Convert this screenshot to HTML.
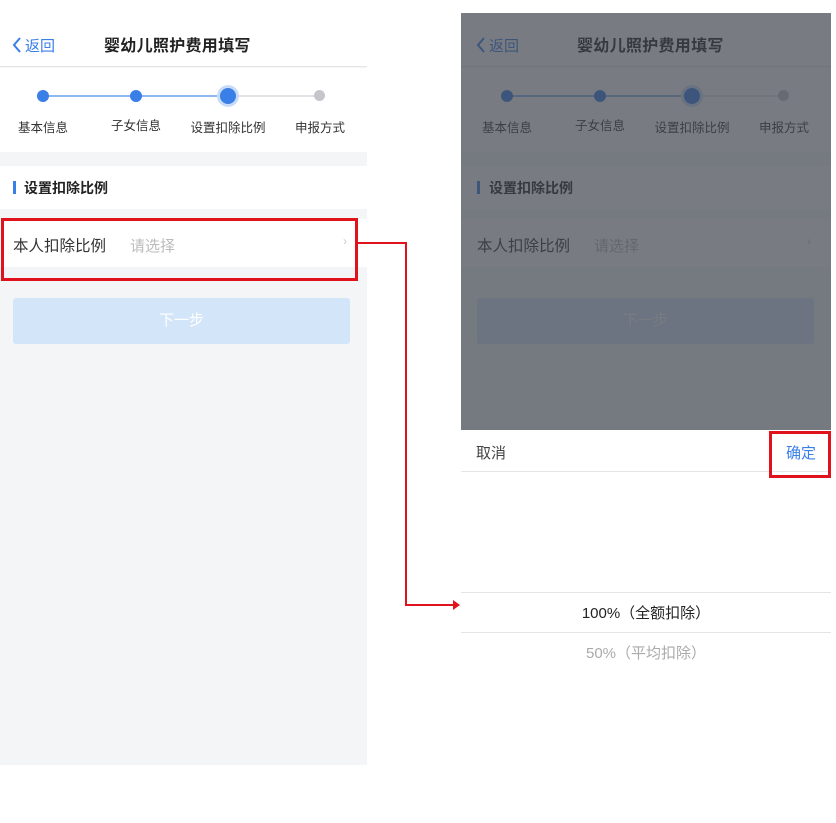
<!DOCTYPE html>
<html><head><meta charset="utf-8"><style>
*{margin:0;padding:0;box-sizing:border-box}
body{width:836px;height:823px;background:#fff;position:relative;overflow:hidden;font-family:"Liberation Sans","Noto Sans CJK SC",sans-serif}
.abs{position:absolute}
.panel{position:absolute;top:0;width:367px;height:765px;background:#f4f5f7;overflow:hidden}
.hdr{position:absolute;left:0;top:0;width:100%;height:67px;background:#fff;border-bottom:1px solid #e6e6e6}
.back{position:absolute;left:12px;top:35px;color:#3a7ee8;font-size:15px}
.back svg{position:absolute;left:0;top:2px}
.back span{position:absolute;left:13px;top:0;white-space:nowrap}
.title{position:absolute;top:32px;font-size:16px;color:#222;font-weight:bold;white-space:nowrap;letter-spacing:0.3px}
.steps{position:absolute;top:68px;left:0;width:100%;height:84px;background:#fff}
.dot{position:absolute;width:12px;height:12px;border-radius:50%;background:#3a7ee8;top:22px}
.ln{position:absolute;height:2px;top:27px}
.lbl{position:absolute;top:49px;font-size:12.5px;color:#333;width:90px;text-align:center}
.sec{position:absolute;top:166px;left:0;width:100%;height:43px;background:#fff}
.row{position:absolute;top:219px;left:0;width:100%;height:48px;background:#fff}
.btn{position:absolute;left:13px;top:298px;width:337px;height:46px;background:#d3e5f8;border-radius:3px;color:#fff;font-size:15px;text-align:center;line-height:46px}
</style></head><body>

<div class="panel" style="left:0">
 <div class="hdr"><div class="back"><svg width="10" height="16" viewBox="0 0 10 16"><path d="M8 1 L2 8 L8 15" fill="none" stroke="#3a7ee8" stroke-width="2"/></svg><span>返回</span></div><div class="title" style="left:104px">婴幼儿照护费用填写</div></div>
 <div class="steps">
  <div class="ln" style="left:43px;width:185px;background:#8fb7f0"></div>
  <div class="ln" style="left:228px;width:92px;background:#e3e3e6"></div>
  <div class="dot" style="left:37px"></div>
  <div class="dot" style="left:130px"></div>
  <div class="dot" style="left:220px;top:20px;width:16px;height:16px;box-shadow:0 0 0 3px #c9dcf7"></div>
  <div class="dot" style="left:314px;background:#c4c6cc;width:11px;height:11px"></div>
  <div class="lbl" style="left:-2px">基本信息</div>
  <div class="lbl" style="left:91px;top:47px">子女信息</div>
  <div class="lbl" style="left:183px">设置扣除比例</div>
  <div class="lbl" style="left:275px">申报方式</div>
 </div>
 <div class="sec"><div class="abs" style="left:13px;top:15px;width:3px;height:13px;background:#3a7ee8"></div><div class="abs" style="left:24px;top:12px;font-size:14px;font-weight:bold;color:#222">设置扣除比例</div></div>
 <div class="row"><div class="abs" style="left:13px;top:15px;font-size:15.5px;color:#333">本人扣除比例</div><div class="abs" style="left:130px;top:16px;font-size:15px;color:#bbb">请选择</div><div class="abs" style="left:343px;top:15px;font-size:12px;color:#ccc">›</div></div>
 <div class="btn">下一步</div>
</div>
<div class="abs" style="left:1px;top:218px;width:357px;height:63px;border:3px solid #e0131d"></div>

<div class="abs" style="left:357px;top:242px;width:50px;height:2px;background:#e0131d"></div>
<div class="abs" style="left:405px;top:242px;width:2px;height:364px;background:#e0131d"></div>
<div class="abs" style="left:405px;top:604px;width:52px;height:2px;background:#e0131d"></div>
<div class="abs" style="left:453px;top:600px;width:0;height:0;border-left:7px solid #e0131d;border-top:5px solid transparent;border-bottom:5px solid transparent"></div>

<div class="panel" style="left:461px;top:13px;width:370px;height:740px;background:#fff">
 <div class="abs" style="left:0;top:-13px;width:370px;height:430px">
 <div class="panel" style="left:0;top:0;width:370px;height:430px">
 <div class="hdr"><div class="back" style="left:15px"><svg width="10" height="16" viewBox="0 0 10 16"><path d="M8 1 L2 8 L8 15" fill="none" stroke="#3a7ee8" stroke-width="2"/></svg><span>返回</span></div><div class="title" style="left:116px">婴幼儿照护费用填写</div></div>
 <div class="steps">
  <div class="ln" style="left:46px;width:185px;background:#8fb7f0"></div>
  <div class="ln" style="left:231px;width:92px;background:#e3e3e6"></div>
  <div class="dot" style="left:40px"></div>
  <div class="dot" style="left:133px"></div>
  <div class="dot" style="left:223px;top:20px;width:16px;height:16px;box-shadow:0 0 0 3px #c9dcf7"></div>
  <div class="dot" style="left:317px;background:#c4c6cc;width:11px;height:11px"></div>
  <div class="lbl" style="left:1px">基本信息</div>
  <div class="lbl" style="left:94px;top:47px">子女信息</div>
  <div class="lbl" style="left:186px">设置扣除比例</div>
  <div class="lbl" style="left:278px">申报方式</div>
 </div>
 <div class="sec"><div class="abs" style="left:16px;top:15px;width:3px;height:13px;background:#3a7ee8"></div><div class="abs" style="left:28px;top:12px;font-size:14px;font-weight:bold;color:#222">设置扣除比例</div></div>
 <div class="row"><div class="abs" style="left:16px;top:15px;font-size:15.5px;color:#333">本人扣除比例</div><div class="abs" style="left:133px;top:16px;font-size:15px;color:#bbb">请选择</div><div class="abs" style="left:346px;top:15px;font-size:12px;color:#ccc">›</div></div>
 <div class="btn" style="left:16px">下一步</div>
 </div>
 <div class="abs" style="left:0;top:13px;width:370px;height:417px;background:rgba(62,68,77,0.7)"></div>
 </div>
 <div class="abs" style="left:0;top:417px;width:370px;height:42px;border-bottom:1px solid #e6e6e6;background:#fff">
  <div class="abs" style="left:15px;top:12px;font-size:15px;color:#444">取消</div>
  <div class="abs" style="right:15px;top:12px;font-size:15px;color:#3a7ee8">确定</div>
 </div>
 <div class="abs" style="left:0;top:579px;width:370px;height:1px;background:#e4e4e4"></div>
 <div class="abs" style="left:0;top:619px;width:370px;height:1px;background:#e4e4e4"></div>
 <div class="abs" style="left:0;top:589px;width:370px;text-align:center;font-size:15px;color:#222">100%（全额扣除）</div>
 <div class="abs" style="left:0;top:629px;width:370px;text-align:center;font-size:15px;color:#aaa">50%（平均扣除）</div>
</div>
<div class="abs" style="left:769px;top:431px;width:62px;height:47px;border:3px solid #e0131d"></div>
</body></html>
